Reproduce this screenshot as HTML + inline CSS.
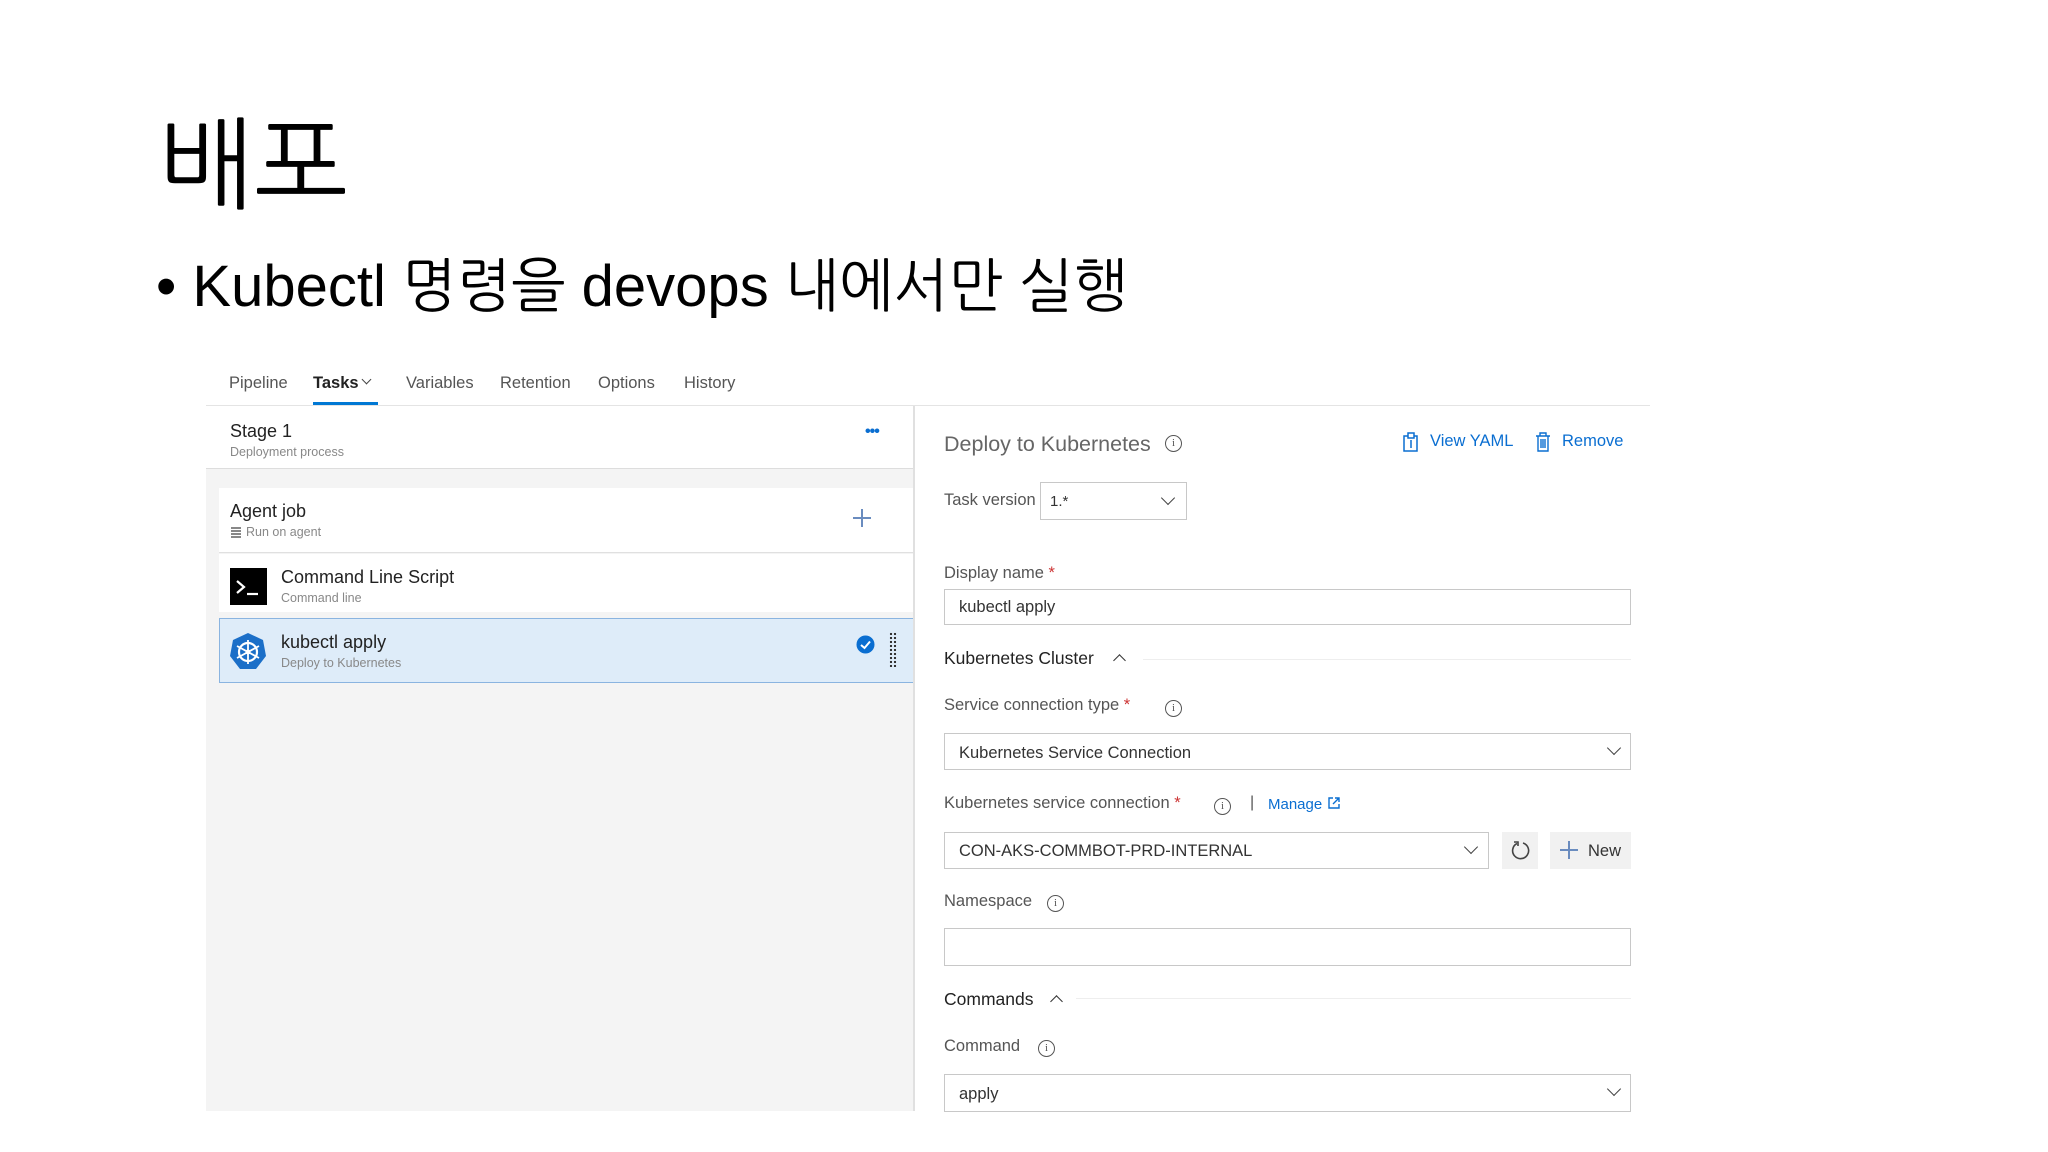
<!DOCTYPE html>
<html><head><meta charset="utf-8"><style>
*{margin:0;padding:0;box-sizing:border-box}
body{width:2048px;height:1152px;background:#fff;position:relative;overflow:hidden;font-family:"Liberation Sans","NanumGothic",sans-serif;color:#333}
.a{position:absolute;white-space:nowrap}
.k{font-family:"Liberation Sans","NanumGothic","Noto Sans CJK KR",sans-serif}
.lbl{font-size:16.5px;color:#555}
.box{position:absolute;border:1.5px solid #c8c8c8;background:#fff}
.sub{font-size:12.5px;color:#888}
.info{position:absolute;width:17px;height:17px;border:1.5px solid #555;border-radius:50%;font-size:11px;line-height:14px;text-align:center;color:#555;font-family:"Liberation Serif",serif}
.chev{position:absolute;width:10px;height:10px;border-right:1.8px solid #444;border-bottom:1.8px solid #444;transform:rotate(45deg)}
.up{position:absolute;width:9px;height:9px;border-left:1.8px solid #333;border-top:1.8px solid #333;transform:rotate(45deg)}
.blue{color:#0a6ed1}
</style></head><body>
<div class="a k" style="left:160px;top:106px;font-size:100px;color:#000;line-height:120px">배포</div>
<div class="a k" style="left:156px;top:252px;font-size:58px;color:#000;line-height:70px">•&nbsp;Kubectl 명령을 devops 내에서만 실행</div>

<!-- tabs -->
<div class="a" style="left:229px;top:374px;font-size:16.5px;color:#555">Pipeline</div>
<div class="a" style="left:313px;top:374px;font-size:16.5px;color:#222;font-weight:bold">Tasks</div>
<div class="chev" style="left:363px;top:376px;width:7px;height:7px;border-width:1.3px"></div>
<div class="a" style="left:406px;top:374px;font-size:16.5px;color:#555">Variables</div>
<div class="a" style="left:500px;top:374px;font-size:16.5px;color:#555">Retention</div>
<div class="a" style="left:598px;top:374px;font-size:16.5px;color:#555">Options</div>
<div class="a" style="left:684px;top:374px;font-size:16.5px;color:#555">History</div>
<div class="a" style="left:313px;top:402px;width:65px;height:3px;background:#0078d4"></div>
<div class="a" style="left:206px;top:405px;width:1444px;height:1px;background:#e4e4e4"></div>

<!-- left panel -->
<div class="a" style="left:206px;top:406px;width:708px;height:705px;background:#f4f4f4"></div>
<div class="a" style="left:206px;top:406px;width:708px;height:63px;background:#fff;border-bottom:1.5px solid #ddd"></div>
<div class="a" style="left:230px;top:421px;font-size:18px;color:#222">Stage 1</div>
<div class="a sub" style="left:230px;top:445px">Deployment process</div>
<div class="a" style="left:865px;top:423px;font-size:16px;color:#0a6ed1;font-weight:bold;letter-spacing:-1px">•••</div>

<div class="a" style="left:219px;top:488px;width:694px;height:65px;background:#fff;border-bottom:1.5px solid #e0e0e0"></div>
<div class="a" style="left:230px;top:501px;font-size:18px;color:#222">Agent job</div>
<div class="a" style="left:231px;top:527px;width:10px;height:12px;background:repeating-linear-gradient(#888 0 2px,#fff 2px 3px)"></div>
<div class="a sub" style="left:246px;top:525px">Run on agent</div>
<div class="a" style="left:853px;top:517px;width:18px;height:1.5px;background:#6a8cbf"></div>
<div class="a" style="left:861px;top:509px;width:1.5px;height:18px;background:#6a8cbf"></div>

<div class="a" style="left:219px;top:554px;width:694px;height:58px;background:#fff"></div>
<div class="a" style="left:230px;top:568px;width:37px;height:37px;background:#000"></div>
<svg class="a" style="left:230px;top:568px" width="37" height="37"><path d="M7 13 L14 19 L7 25" stroke="#fff" stroke-width="2.2" fill="none"/><path d="M17 26 H28" stroke="#fff" stroke-width="2.2"/></svg>
<div class="a" style="left:281px;top:567px;font-size:18px;color:#222">Command Line Script</div>
<div class="a sub" style="left:281px;top:591px">Command line</div>

<div class="a" style="left:219px;top:618px;width:695px;height:65px;background:#deecf9;border:1.5px solid #8ab4e0"></div>
<svg class="a" style="left:229px;top:632px" width="38" height="40" viewBox="0 0 38 40"><path d="M19 1 L34 8 L37 24 L27 37 L11 37 L1 24 L4 8 Z" fill="#1b6fc8"/><circle cx="19" cy="20" r="9" fill="none" stroke="#fff" stroke-width="2.2"/><circle cx="19" cy="20" r="2.5" fill="#fff"/><path d="M19 8V32M8 14L30 26M8 26L30 14" stroke="#fff" stroke-width="1.8"/></svg>
<div class="a" style="left:281px;top:632px;font-size:18px;color:#222">kubectl apply</div>
<div class="a sub" style="left:281px;top:656px">Deploy to Kubernetes</div>
<svg class="a" style="left:856px;top:635px" width="19" height="19"><circle cx="9.5" cy="9.5" r="9" fill="#0a6ed1"/><path d="M5 10 L8.5 13 L14 6.5" stroke="#fff" stroke-width="2" fill="none"/></svg>
<div class="a" style="left:889px;top:632px;width:8px;height:35px;background:radial-gradient(circle,#333 1.1px,transparent 1.3px) 0 0/4px 4px"></div>

<div class="a" style="left:913px;top:406px;width:1.5px;height:705px;background:#e0e0e0"></div>

<!-- right panel -->
<div class="a" style="left:944px;top:432px;font-size:21.5px;color:#666">Deploy to Kubernetes</div>
<div class="info" style="left:1165px;top:435px">i</div>
<svg class="a" style="left:1402px;top:432px" width="18" height="20"><rect x="2" y="4" width="13" height="15" fill="none" stroke="#0a6ed1" stroke-width="1.5"/><rect x="6" y="1" width="6" height="5" fill="#fff" stroke="#0a6ed1" stroke-width="1.5"/><path d="M9 8V16" stroke="#0a6ed1" stroke-width="1.5"/></svg>
<div class="a blue" style="left:1430px;top:432px;font-size:16.5px">View YAML</div>
<svg class="a" style="left:1534px;top:432px" width="18" height="20"><path d="M2 4H16M6 4V1H12V4M4 4V19H14V4M7 7V16M9 7V16M11 7V16" stroke="#0a6ed1" stroke-width="1.4" fill="none"/></svg>
<div class="a blue" style="left:1562px;top:432px;font-size:16.5px">Remove</div>

<div class="a lbl" style="left:944px;top:491px">Task version</div>
<div class="box" style="left:1040px;top:482px;width:147px;height:38px"></div>
<div class="a" style="left:1050px;top:493px;font-size:15px;color:#333">1.*</div>
<div class="chev" style="left:1163px;top:493px"></div>

<div class="a lbl" style="left:944px;top:564px">Display name <span style="color:#c33">*</span></div>
<div class="box" style="left:944px;top:589px;width:687px;height:36px"></div>
<div class="a" style="left:959px;top:598px;font-size:16.5px;color:#333">kubectl apply</div>

<div class="a" style="left:944px;top:648px;font-size:17.5px;color:#222">Kubernetes Cluster</div>
<div class="up" style="left:1115px;top:656px"></div>
<div class="a" style="left:1143px;top:659px;width:488px;height:1px;background:#eee"></div>

<div class="a lbl" style="left:944px;top:696px">Service connection type <span style="color:#c33">*</span></div>
<div class="info" style="left:1165px;top:700px">i</div>
<div class="box" style="left:944px;top:733px;width:687px;height:37px"></div>
<div class="a" style="left:959px;top:744px;font-size:16.5px;color:#333">Kubernetes Service Connection</div>
<div class="chev" style="left:1609px;top:743px"></div>

<div class="a lbl" style="left:944px;top:794px">Kubernetes service connection <span style="color:#c33">*</span></div>
<div class="info" style="left:1214px;top:798px">i</div>
<div class="a" style="left:1250px;top:794px;font-size:16px;color:#555">|</div>
<div class="a blue" style="left:1268px;top:796px;font-size:15px">Manage</div>
<svg class="a" style="left:1328px;top:797px" width="12" height="12"><path d="M5 1H1V11H11V7M7 1H11V5M11 1L5 7" stroke="#0a6ed1" stroke-width="1.4" fill="none"/></svg>
<div class="box" style="left:944px;top:832px;width:545px;height:37px"></div>
<div class="a" style="left:959px;top:842px;font-size:16.5px;color:#333">CON-AKS-COMMBOT-PRD-INTERNAL</div>
<div class="chev" style="left:1466px;top:842px"></div>
<div class="a" style="left:1502px;top:832px;width:36px;height:37px;background:#f1f1f1"></div>
<svg class="a" style="left:1510px;top:840px" width="21" height="21"><path d="M7 3.5A8 8 0 1 0 13 3" stroke="#444" stroke-width="1.6" fill="none"/><path d="M4 2H8V6" stroke="#444" stroke-width="1.6" fill="none"/></svg>
<div class="a" style="left:1550px;top:832px;width:81px;height:37px;background:#f1f1f1"></div>
<div class="a" style="left:1560px;top:849px;width:18px;height:1.6px;background:#6a8cbf"></div>
<div class="a" style="left:1568px;top:841px;width:1.6px;height:18px;background:#6a8cbf"></div>
<div class="a" style="left:1588px;top:842px;font-size:16.5px;color:#333">New</div>

<div class="a lbl" style="left:944px;top:892px">Namespace</div>
<div class="info" style="left:1047px;top:895px">i</div>
<div class="box" style="left:944px;top:928px;width:687px;height:38px"></div>

<div class="a" style="left:944px;top:989px;font-size:17.5px;color:#222">Commands</div>
<div class="up" style="left:1052px;top:997px"></div>
<div class="a" style="left:1076px;top:998px;width:555px;height:1px;background:#eee"></div>

<div class="a lbl" style="left:944px;top:1037px">Command</div>
<div class="info" style="left:1038px;top:1040px">i</div>
<div class="box" style="left:944px;top:1074px;width:687px;height:38px"></div>
<div class="a" style="left:959px;top:1085px;font-size:16.5px;color:#333">apply</div>
<div class="chev" style="left:1609px;top:1084px"></div>
</body></html>
